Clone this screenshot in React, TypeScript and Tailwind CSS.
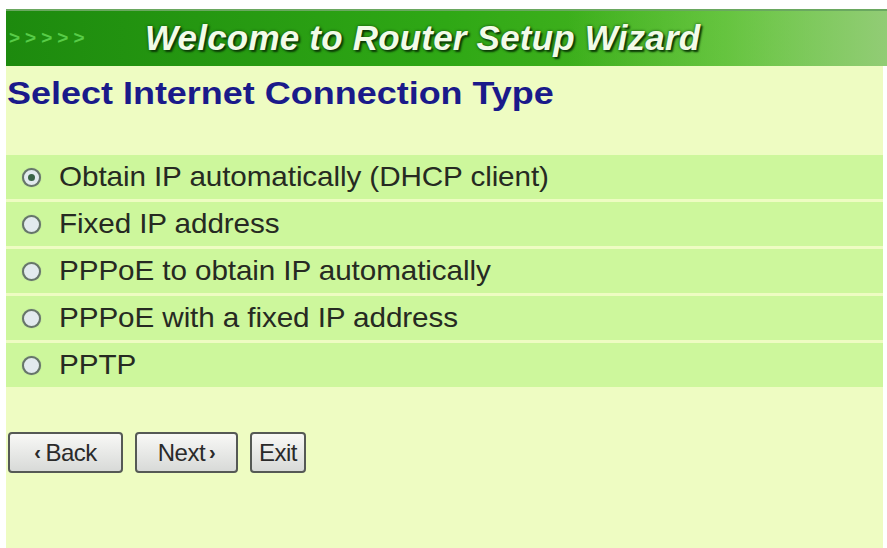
import React from "react";

const options = [
  "Obtain IP automatically (DHCP client)",
  "Fixed IP address",
  "PPPoE to obtain IP automatically",
  "PPPoE with a fixed IP address",
  "PPTP",
];

function Radio({ checked }: { checked: boolean }) {
  return (
    <span className="w-[19px] h-[19px] rounded-full border-[2.5px] border-[#66766a] bg-[#e2eaee] flex items-center justify-center shrink-0 shadow-[0_0_1px_#8a9a88]">
      {checked && <span className="w-[7px] h-[7px] rounded-full bg-[#3a6446]" />}
    </span>
  );
}

function Btn({ children, w }: { children: React.ReactNode; w: string }) {
  return (
    <button
      className={`${w} h-[41px] rounded-[4px] border-[2px] border-[#555955] bg-gradient-to-b from-[#f8f8f6] to-[#d8dad8] text-[24px] text-[#2a2a2a] flex items-center justify-center tracking-[-0.5px]`}
      style={{ fontFamily: '"Liberation Sans", Arial, sans-serif' }}
    >
      {children}
    </button>
  );
}

export default function App() {
  return (
    <div
      className="w-[887px] h-[548px] bg-white pt-[9px] pl-[6px] overflow-hidden"
      style={{ fontFamily: '"Liberation Sans", Arial, sans-serif' }}
    >
      <div className="h-[57px] flex items-center bg-gradient-to-r from-[#1d8a0e] via-[#2fa815] to-[#58c02a] relative overflow-hidden border-t-[2px] border-[#6aa860]">
        <div className="absolute right-0 top-0 h-full w-[320px] bg-gradient-to-r from-transparent via-[#8fd86a]/40 to-[#a0cf88]/80" />
        <span className="ml-[3px] text-[#58cc48] text-[19px] font-bold tracking-[5px] w-[136px]">&gt;&gt;&gt;&gt;&gt;</span>
        <span
          className="text-[35px] font-bold italic text-[#f2fbe8] relative tracking-[0.2px]"
          style={{ textShadow: "2px 2px 2px #0b3a06, 0 0 3px #124d0a" }}
        >
          Welcome to Router Setup Wizard
        </span>
      </div>
      <div className="mr-[4px] h-[482px] bg-[#eefcc2] flex flex-col">
        <div className="pt-[10px] pl-[1px] h-[89px]">
          <h1 className="inline-block origin-left scale-x-[1.16] text-[31px] font-bold text-[#1a1a8a] leading-[36px]">
            Select Internet Connection Type
          </h1>
        </div>
        <div className="flex flex-col gap-[3px]">
          {options.map((o, i) => (
            <div key={o} className="h-[44px] bg-[#cdf79c] flex items-center pl-[16px] gap-[18px]">
              <Radio checked={i === 0} />
              <span className="inline-block origin-left scale-x-[1.06] text-[28px] text-[#262a22] tracking-[-0.1px]">{o}</span>
            </div>
          ))}
        </div>
        <div className="flex gap-[12px] pl-[2px] mt-[45px]">
          <Btn w="w-[115px]">
            <span className="text-[20px] font-bold mr-[5px] -mt-[2px]">&lsaquo;</span>Back
          </Btn>
          <Btn w="w-[103px]">
            Next<span className="text-[20px] font-bold ml-[4px] -mt-[2px]">&rsaquo;</span>
          </Btn>
          <Btn w="w-[56px]">Exit</Btn>
        </div>
      </div>
    </div>
  );
}
